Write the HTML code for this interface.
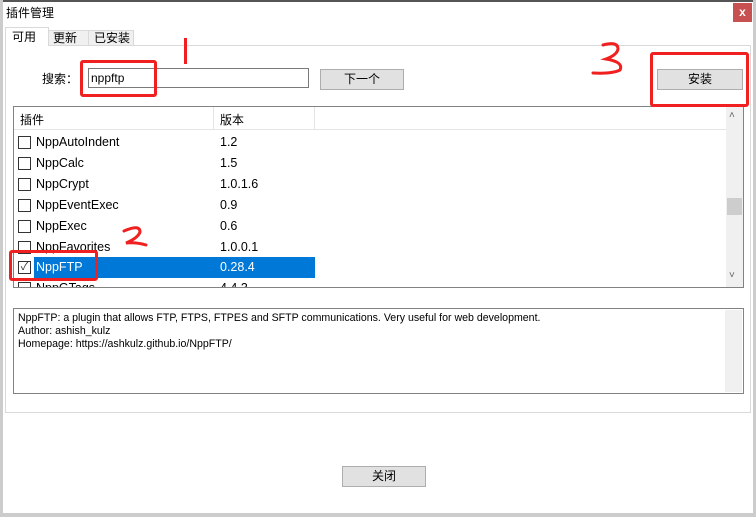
<!DOCTYPE html>
<html><head><meta charset="utf-8"><style>
*{margin:0;padding:0;box-sizing:border-box}
body{width:756px;height:517px;background:#fff;position:relative;overflow:hidden;font-family:"Liberation Sans","Noto Sans CJK SC",sans-serif;font-size:12px;color:#000}
.a{position:absolute}
.btn{position:absolute;background:#e1e1e1;border:1px solid #adadad;text-align:center;line-height:19px;font-size:12px}
.row{position:absolute;left:14px;height:21px;width:300px;font-size:12.5px;line-height:21px}
.cb{position:absolute;left:4px;top:4px;width:13px;height:13px;border:1px solid #333;background:#fff}
.nm{position:absolute;left:22px}
.vr{position:absolute;left:206px}
.red{position:absolute;border:3px solid #f02020;border-radius:3px}
</style></head><body>
<div class="a" style="left:0;top:0;width:756px;height:2px;background:#555"></div>
<div class="a" style="left:0;top:0;width:3px;height:517px;background:#ccc"></div>
<div class="a" style="left:753px;top:0;width:3px;height:517px;background:#ccc"></div>
<div class="a" style="left:0;top:513px;width:756px;height:4px;background:#ccc"></div>
<div class="a" style="left:6px;top:4px;font-size:12px">插件管理</div>
<div class="a" style="left:733px;top:3px;width:19px;height:19px;background:#c75050;color:#fff;font-weight:bold;text-align:center;line-height:18px;font-size:12px">x</div>
<div class="a" style="left:5px;top:45px;width:746px;height:368px;border:1px solid #d9d9d9"></div>
<div class="a" style="left:5px;top:27px;width:44px;height:19px;background:#fff;border:1px solid #d9d9d9;border-bottom:none;padding-left:6px;line-height:18px">可用</div>
<div class="a" style="left:48px;top:30px;width:41px;height:16px;background:#f0f0f0;border:1px solid #d9d9d9;padding-left:4px;line-height:15px">更新</div>
<div class="a" style="left:88px;top:30px;width:46px;height:16px;background:#f0f0f0;border:1px solid #d9d9d9;padding-left:5px;line-height:15px">已安装</div>
<div class="a" style="left:42px;top:70px">搜索：</div>
<div class="a" style="left:88px;top:68px;width:221px;height:20px;border:1px solid #7a7a7a;padding-left:2px;line-height:19px">nppftp</div>
<div class="btn" style="left:320px;top:69px;width:84px;height:21px">下一个</div>
<div class="btn" style="left:657px;top:69px;width:86px;height:21px">安装</div>
<div class="a" style="left:13px;top:106px;width:731px;height:182px;border:1px solid #828282;overflow:hidden">
 <div class="a" style="left:0;top:0;width:712px;height:23px;border-bottom:1px solid #e5e5e5"></div>
 <div class="a" style="left:6px;top:4px">插件</div>
 <div class="a" style="left:199px;top:0;width:1px;height:23px;background:#e5e5e5"></div>
 <div class="a" style="left:206px;top:4px">版本</div>
 <div class="a" style="left:300px;top:0;width:1px;height:23px;background:#e5e5e5"></div>
 <div class="a" style="left:712px;top:0;width:17px;height:180px;background:#f0f0f0"></div>
 <div class="a" style="left:713px;top:91px;width:15px;height:17px;background:#cdcdcd"></div>
 <div class="a" style="left:715px;top:3px;font-size:10px;color:#606060">&#x2C4;</div>
 <div class="a" style="left:715px;top:163px;font-size:10px;color:#606060">&#x2C5;</div>
</div>
<div class="row" style="top:132px"><div class="cb"></div><div class="nm">NppAutoIndent</div><div class="vr">1.2</div></div>
<div class="row" style="top:153px"><div class="cb"></div><div class="nm">NppCalc</div><div class="vr">1.5</div></div>
<div class="row" style="top:174px"><div class="cb"></div><div class="nm">NppCrypt</div><div class="vr">1.0.1.6</div></div>
<div class="row" style="top:195px"><div class="cb"></div><div class="nm">NppEventExec</div><div class="vr">0.9</div></div>
<div class="row" style="top:216px"><div class="cb"></div><div class="nm">NppExec</div><div class="vr">0.6</div></div>
<div class="row" style="top:237px"><div class="cb"></div><div class="nm">NppFavorites</div><div class="vr">1.0.0.1</div></div>
<div class="a" style="left:34px;top:257px;width:281px;height:21px;background:#0078d7"></div>
<div class="row" style="top:257px;color:#fff"><div class="cb" style="color:#333;font-size:11px;line-height:11px;text-align:center">✓</div><div class="nm">NppFTP</div><div class="vr">0.28.4</div></div>
<div class="a" style="left:14px;top:278px;width:300px;height:9px;overflow:hidden"><div class="row" style="left:0;top:0"><div class="cb"></div><div class="nm">NppGTags</div><div class="vr">4.4.3</div></div></div>
<div class="a" style="left:13px;top:308px;width:731px;height:86px;border:1px solid #828282;padding:3px 4px;font-size:10.6px;line-height:13px">NppFTP: a plugin that allows FTP, FTPS, FTPES and SFTP communications. Very useful for web development.<br>Author: ashish_kulz<br>Homepage: https://ashkulz.github.io/NppFTP/
 <div class="a" style="left:711px;top:1px;width:17px;height:82px;background:#f0f0f0"></div>
</div>
<div class="btn" style="left:342px;top:466px;width:84px;height:21px">关闭</div>
<div class="red" style="left:80px;top:60px;width:77px;height:37px"></div>
<div class="a" style="left:184px;top:38px;width:3px;height:26px;background:#f02020"></div>
<div class="red" style="left:650px;top:52px;width:99px;height:55px"></div>
<div class="red" style="left:9px;top:250px;width:89px;height:31px"></div>
<svg class="a" style="left:0;top:0" width="756" height="517"><g fill="none" stroke="#f02020" stroke-width="3" stroke-linecap="round">
<path d="M603 45 Q618 41 618 49 Q617 55 606 59 Q624 62 620 70 Q612 74 593 73"/>
<path d="M124 231 Q140 224 140 232 Q138 238 126 243 Q136 242 146 245"/>
</g></svg>
</body></html>
